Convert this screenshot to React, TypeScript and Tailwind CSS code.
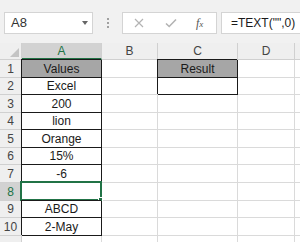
import React from "react";

const cols = [
  { key: "A", w: "w-[80px]" },
  { key: "B", w: "w-[56px]" },
  { key: "C", w: "w-[80px]" },
  { key: "D", w: "w-[57px]" },
  { key: "", w: "w-[20px]" },
];

const rows = [
  { n: "1", h: "h-[18px]", a: "Values" },
  { n: "2", h: "h-[17px]", a: "Excel" },
  { n: "3", h: "h-[18px]", a: "200" },
  { n: "4", h: "h-[17px]", a: "lion" },
  { n: "5", h: "h-[18px]", a: "Orange" },
  { n: "6", h: "h-[17px]", a: "15%" },
  { n: "7", h: "h-[18px]", a: "-6" },
  { n: "8", h: "h-[18px]", a: "" },
  { n: "9", h: "h-[17px]", a: "ABCD" },
  { n: "10", h: "h-[18px]", a: "2-May" },
  { n: "", h: "h-[10px]", a: null },
];

function Cell({
  w,
  boxed,
  fill,
  selected,
  children,
}: {
  w: string;
  boxed?: boolean;
  fill?: boolean;
  selected?: boolean;
  children?: React.ReactNode;
}) {
  return (
    <div
      className={`relative shrink-0 ${w} h-full flex items-center justify-center border-r border-b ${
        boxed ? "border-[#1a1a1a] shadow-[-1px_-1px_0_0_#1a1a1a] z-[1]" : "border-[#dadada]"
      } ${fill ? "bg-[#a6a6a6]" : "bg-white"} text-[12px] text-[#1a1a1a]`}
    >
      {children}
      {selected && (
        <div className="absolute -left-[2px] -top-[2px] -right-[1px] -bottom-[1px] border-2 border-[#217346] z-[2]">
          <div className="absolute -right-[3px] -bottom-[3px] w-[5px] h-[5px] bg-[#217346] border border-white" />
        </div>
      )}
    </div>
  );
}

export default function App() {
  return (
    <div className="w-[300px] h-[242px] overflow-hidden bg-white font-['Liberation_Sans',Arial,sans-serif] select-none">
      {/* formula bar */}
      <div className="h-[43px] bg-[#f1f1f1] flex items-start pt-[12px] pl-[4px]">
        <div className="w-[89px] h-[22px] bg-white border border-[#d4d4d4] flex items-center pl-[6px] pr-[4px]">
          <span className="text-[13px] text-[#333]">A8</span>
          <span className="ml-auto w-0 h-0 border-l-[3px] border-r-[3px] border-t-[4px] border-l-transparent border-r-transparent border-t-[#666]" />
        </div>
        <div className="w-[29px] h-[22px] flex flex-col items-center justify-center gap-[2px]">
          <span className="w-[2px] h-[2px] bg-[#a0a0a0]" />
          <span className="w-[2px] h-[2px] bg-[#a0a0a0]" />
          <span className="w-[2px] h-[2px] bg-[#a0a0a0]" />
        </div>
        <div className="w-[95px] h-[22px] bg-white border border-[#d4d4d4] flex items-center">
          <svg width="10" height="10" viewBox="0 0 10 10" className="ml-[11px]">
            <path d="M1 1L9 9M9 1L1 9" stroke="#b3b3b3" strokeWidth="1.2" />
          </svg>
          <svg width="12" height="10" viewBox="0 0 12 10" className="ml-[21px]">
            <path d="M1 5.5L4.2 8.5L11 1.5" stroke="#b3b3b3" strokeWidth="1.6" fill="none" />
          </svg>
          <span className="ml-[19px] text-[12px] italic text-[#555] font-['Liberation_Serif',serif]">
            f<span className="text-[9px]">x</span>
          </span>
        </div>
        <div className="ml-[4px] flex-1 h-[22px] bg-white border border-[#d4d4d4] border-r-0 flex items-center pl-[9px]">
          <span className="text-[12px] text-[#1a1a1a]">=TEXT("",0)</span>
        </div>
      </div>

      {/* column headers */}
      <div className="h-[17px] flex bg-[#efefef]">
        <div className="w-[22px] shrink-0 h-full border-r border-b border-[#d0d0d0] flex items-end justify-end pr-[2px] pb-[2px]">
          <svg width="9" height="9" viewBox="0 0 9 9">
            <path d="M9 0L9 9L0 9Z" fill="#c4c4c4" />
          </svg>
        </div>
        {cols.map((c, i) => (
          <div
            key={i}
            className={`shrink-0 ${c.w} h-full flex items-center justify-center text-[12px] border-r border-[#d0d0d0] ${
              c.key === "A"
                ? "bg-[#d2d2d2] text-[#217346] border-b-2 border-b-[#217346]"
                : "text-[#444] border-b border-b-[#d0d0d0]"
            }`}
          >
            {c.key}
          </div>
        ))}
      </div>

      {/* rows */}
      {rows.map((r, i) => (
        <div key={i} className={`flex ${r.h}`}>
          <div
            className={`w-[22px] shrink-0 h-full flex items-center justify-center text-[12px] border-r border-b border-[#d0d0d0] ${
              r.n === "8" ? "bg-[#d2d2d2] text-[#217346]" : "bg-[#efefef] text-[#444]"
            }`}
          >
            {r.n}
          </div>
          <Cell w="w-[80px]" boxed={r.a !== null} fill={r.n === "1"} selected={r.n === "8"}>
            {r.a}
          </Cell>
          <Cell w="w-[56px]" />
          <Cell w="w-[80px]" boxed={r.n === "1" || r.n === "2"} fill={r.n === "1"}>
            {r.n === "1" ? "Result" : null}
          </Cell>
          <Cell w="w-[57px]" />
          <Cell w="w-[20px]" />
        </div>
      ))}
    </div>
  );
}
